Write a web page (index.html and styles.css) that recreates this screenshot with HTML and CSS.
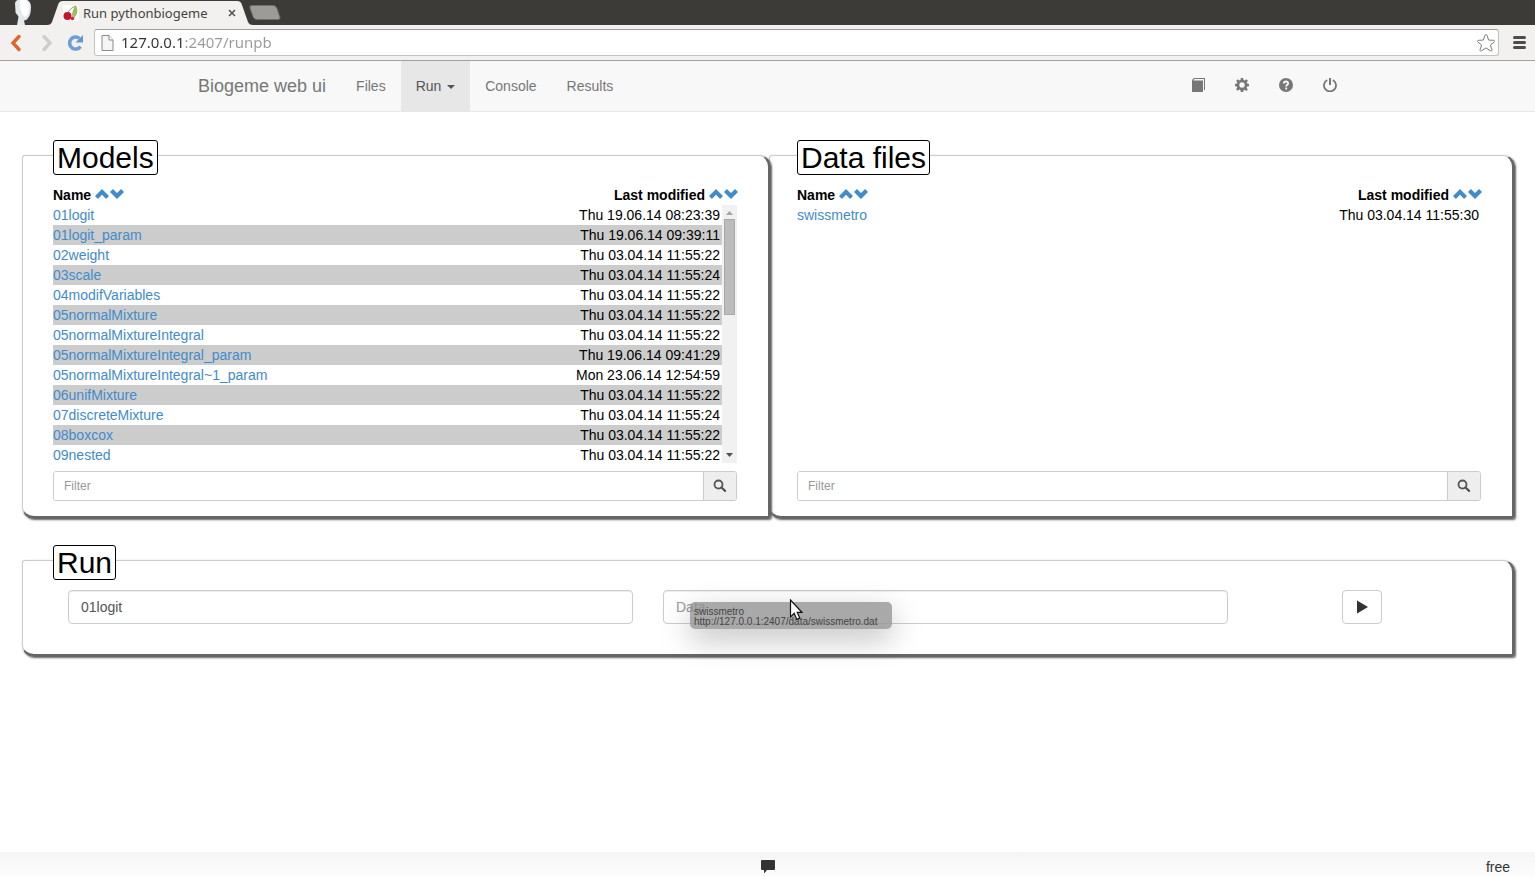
FILE: index.html
```html
<!DOCTYPE html>
<html lang="en">
<head>
<meta charset="utf-8">
<title>Run pythonbiogeme</title>
<link rel="stylesheet" href="styles.css">
</head>
<body>
<svg class="defs" aria-hidden="true">
  <symbol id="up" viewBox="0 0 14 14"><path d="M0 9 7 2l7 7-2.900 2.900L7 7.800l-4.100 4.100z"/></symbol>
  <symbol id="down" viewBox="0 0 14 14"><path d="M0 4.900 2.900 2 7 6.100 11.100 2 14 4.900l-7 7z"/></symbol>
  <symbol id="search" viewBox="0 0 14 14"><circle cx="5.500" cy="5.500" r="4" fill="none" stroke="currentColor" stroke-width="1.800"/><path d="M8.500 8.500l3.600 3.400" stroke="currentColor" stroke-width="2.200" stroke-linecap="round"/></symbol>
</svg>

<header class="browser">
  <div class="tabstrip">
    <svg class="head" width="20" height="25" viewBox="0 0 20 25"><path d="M2 3C3 0 6-1 10-1c5 0 8 3 8 8 0 5-1 9-3 11-1 2-2 2-4 2.500L12 25H4l1.500-8C5 14 2 14 2.500 11z" fill="#e3eaec"/><path d="M7 0c5-1 9 1 9 6s-1 9-4 11C8 15 6 5 7 0z" fill="#fff"/></svg>
    <div class="tab">
      <svg class="tab-shape" width="206" height="25" viewBox="0 0 206 25"><path d="M0 25c3 0 4-1 5-3l6-17c1-3 2-4 5-4h174c3 0 4 1 5 4l6 17c1 2 2 3 5 3z" fill="#f2f1f0"/></svg>
      <svg class="favicon" width="16" height="16" viewBox="0 0 16 16"><path d="M0 0h16v16H0z" fill="#fff"/><path d="M4 9C6 5 8 3 13 1M10 12C9 8 11 4 13 1" fill="none" stroke="#839a48"/><path d="M13 1c2 3 2 8-2 12-2-4 0-8 2-12z" fill="#99bd59"/><circle cx="4.500" cy="11" r="4" fill="#c3182b"/><circle cx="9.500" cy="13.500" r="1.800" fill="#d5223a"/></svg>
      <span class="tab-title">Run pythonbiogeme</span>
      <button class="tab-close" aria-label="Close tab"><svg width="8" height="8" viewBox="0 0 8 8"><path d="M1 1l6 6M7 1 1 7" stroke="#55544f" stroke-width="1.600"/></svg></button>
    </div>
    <button class="newtab" aria-label="New tab"><svg width="32" height="15" viewBox="0 0 32 15"><path d="M3 .5h21q3 0 4 3l3 9q.5 2-2 2H8q-3 0-4-3L1 3Q0 .5 3 .5z" fill="#9c9b98" stroke="#6e6d69"/></svg></button>
  </div>
  <div class="toolbar">
    <button aria-label="Back"><svg width="12" height="18" viewBox="0 0 12 18"><path d="M9 2.500 3 9l6 6.500" fill="none" stroke="#e0642d" stroke-width="3.400" stroke-linecap="round"/></svg></button>
    <button aria-label="Forward"><svg width="12" height="18" viewBox="0 0 12 18"><path d="M3 2.500 9 9l-6 6.500" fill="none" stroke="#cfcdcb" stroke-width="3.400" stroke-linecap="round"/></svg></button>
    <button aria-label="Reload"><svg width="18" height="18" viewBox="0 0 18 18"><path d="M12.500 4.500A6 6 0 1 0 13.500 12.500" fill="none" stroke="#6d9fd6" stroke-width="3.600"/><path d="M16 1v7.500H8.500z" fill="#6296cf"/></svg></button>
    <div class="omnibox">
      <svg width="13" height="16" viewBox="0 0 13 16"><path d="M1 .5h7l4 4.500v10.500H1z" fill="#f5f5f5" stroke="#8a8a8a"/><path d="M8 .5V5h4" fill="#fff" stroke="#8a8a8a"/></svg>
      <input class="url" aria-label="Address" value="127.0.0.1:2407/runpb">
      <button aria-label="Bookmark this page"><svg width="20" height="20" viewBox="0 0 20 20"><path d="M10 1.500c.7 0 1 .5 1.200 1.200l1.400 4.400 4.800.2c1.400.1 1.600 1.100.6 1.900l-3.600 2.800 1.500 4.500c.4 1.400-.5 2-1.600 1.200L10 14.900l-4.300 2.800c-1.100.8-2 .2-1.600-1.200L5.600 12 2 9.200c-1-.8-.8-1.800.6-1.900l4.800-.2 1.400-4.400C9 2 9.300 1.500 10 1.500z" fill="#fff" stroke="#7c7c7c"/></svg></button>
    </div>
    <button aria-label="Menu"><svg width="13" height="13" viewBox="0 0 13 13"><path d="M1.500 1.500h10M1.500 6.500h10M1.500 11.500h10" stroke="#4d4d4d" stroke-width="3" stroke-linecap="round"/></svg></button>
  </div>
</header>

<nav class="navbar">
  <div class="container">
    <a class="brand" href="#">Biogeme web ui</a>
    <a href="#">Files</a>
    <a class="active" href="#">Run <i class="caret"></i></a>
    <a href="#">Console</a>
    <a href="#">Results</a>
    <a class="first-icon" href="#" aria-label="Manual"><svg width="14" height="14" viewBox="0 0 14 14"><path d="M3 0h11v12h-1V1H3.500L2 2.500h10V14H1V2z"/></svg></a>
    <a href="#" aria-label="Settings"><svg width="14" height="14" viewBox="0 0 14 14"><path fill-rule="evenodd" d="M5.800 0h2.400l.4 1.900 1.100.5 1.700-1.200 1.500 1.500-1.200 1.700.5 1.100 1.800.4v2.300l-1.900.4-.5 1.100 1.200 1.700-1.500 1.500-1.700-1.200-1.100.5-.3 1.800H5.800l-.4-1.900-1.100-.5-1.700 1.200-1.500-1.500 1.200-1.700-.5-1.100L0 8.200V5.900l1.900-.4.5-1.100L1.200 2.700l1.500-1.500 1.700 1.200 1.100-.5zM7 4.300a2.700 2.700 0 1 0 0 5.400 2.700 2.700 0 0 0 0-5.400z"/></svg></a>
    <a href="#" aria-label="Help"><svg width="14" height="14" viewBox="0 0 14 14"><circle cx="7" cy="7" r="7"/><path d="M4.800 5.600C4.800 2.800 9.200 2.900 9.200 5.300 9.200 6.800 7.200 6.700 7.200 8.400M7.200 9.500v1.900" fill="none" stroke="#f8f8f8" stroke-width="1.800"/></svg></a>
    <a href="#" aria-label="Shut down"><svg width="14" height="14" viewBox="0 0 14 14"><path d="M4.200 2A6 6 0 1 0 9.800 2" fill="none" stroke="currentColor" stroke-width="1.800"/><path d="M6 0h2v7H6z"/></svg></a>
  </div>
</nav>

<main>
  <div class="panels">
    <section class="panel models">
      <h2>Models</h2>
      <div class="sorts">
        <div>Name <button aria-label="Name ascending"><svg><use href="#up"/></svg></button><button aria-label="Name descending"><svg><use href="#down"/></svg></button></div>
        <div>Last modified <button aria-label="Date ascending"><svg><use href="#up"/></svg></button><button aria-label="Date descending"><svg><use href="#down"/></svg></button></div>
      </div>
      <div class="list">
        <table>
          <tr><td><a href="#">01logit</a></td><td>Thu 19.06.14 08:23:39</td></tr>
          <tr><td><a href="#">01logit_param</a></td><td>Thu 19.06.14 09:39:11</td></tr>
          <tr><td><a href="#">02weight</a></td><td>Thu 03.04.14 11:55:22</td></tr>
          <tr><td><a href="#">03scale</a></td><td>Thu 03.04.14 11:55:24</td></tr>
          <tr><td><a href="#">04modifVariables</a></td><td>Thu 03.04.14 11:55:22</td></tr>
          <tr><td><a href="#">05normalMixture</a></td><td>Thu 03.04.14 11:55:22</td></tr>
          <tr><td><a href="#">05normalMixtureIntegral</a></td><td>Thu 03.04.14 11:55:22</td></tr>
          <tr><td><a href="#">05normalMixtureIntegral_param</a></td><td>Thu 19.06.14 09:41:29</td></tr>
          <tr><td><a href="#">05normalMixtureIntegral~1_param</a></td><td>Mon 23.06.14 12:54:59</td></tr>
          <tr><td><a href="#">06unifMixture</a></td><td>Thu 03.04.14 11:55:22</td></tr>
          <tr><td><a href="#">07discreteMixture</a></td><td>Thu 03.04.14 11:55:24</td></tr>
          <tr><td><a href="#">08boxcox</a></td><td>Thu 03.04.14 11:55:22</td></tr>
          <tr><td><a href="#">09nested</a></td><td>Thu 03.04.14 11:55:22</td></tr>
        </table>
        <div class="scrollbar">
          <svg width="7" height="4" viewBox="0 0 7 4"><path d="M0 4 3.500 0 7 4z" fill="#a3a3a3"/></svg>
          <div class="thumb"></div>
          <svg class="end" width="7" height="4" viewBox="0 0 7 4"><path d="M0 0h7L3.500 4z" fill="#505050"/></svg>
        </div>
      </div>
      <div class="filter"><input aria-label="Filter models" placeholder="Filter"><button aria-label="Search models"><svg><use href="#search"/></svg></button></div>
    </section>

    <section class="panel data">
      <h2>Data files</h2>
      <div class="sorts">
        <div>Name <button aria-label="Name ascending"><svg><use href="#up"/></svg></button><button aria-label="Name descending"><svg><use href="#down"/></svg></button></div>
        <div>Last modified <button aria-label="Date ascending"><svg><use href="#up"/></svg></button><button aria-label="Date descending"><svg><use href="#down"/></svg></button></div>
      </div>
      <div class="list">
        <table>
          <tr><td><a href="#">swissmetro</a></td><td>Thu 03.04.14 11:55:30</td></tr>
        </table>
      </div>
      <div class="filter"><input aria-label="Filter data files" placeholder="Filter"><button aria-label="Search data files"><svg><use href="#search"/></svg></button></div>
    </section>
  </div>

  <section class="panel run">
    <h2>Run</h2>
    <form class="run-row">
      <div><input aria-label="Model" value="01logit"></div>
      <div class="drop">
        <input aria-label="Data" placeholder="Data">
        <div class="ghost">swissmetro<br>http://127.0.0.1:2407/data/swissmetro.dat</div>
        <svg class="cursor" width="14" height="22" viewBox="0 0 14 22"><path d="M1.500 1v17l3.700-3.600 2.600 6 3-1.300-2.600-5.800h4.700z" fill="#fff" stroke="#111" stroke-width="1.200"/></svg>
      </div>
      <div class="go"><button type="button" aria-label="Run model"><svg width="14" height="14" viewBox="0 0 14 14"><path d="M2 .5 13 7 2 13.500z"/></svg></button></div>
    </form>
  </section>
</main>

<footer>
  <button aria-label="Messages"><svg width="14" height="14" viewBox="0 0 14 14"><path d="M1 0h12q1 0 1 1v8q0 1-1 1H6l-3 3.500V10H1q-1 0-1-1V1q0-1 1-1z"/></svg></button>
  <span>free</span>
</footer>
</body>
</html>
```
FILE: styles.css
```css
* { box-sizing: border-box; }
body {
  margin: 0;
  height: 100vh;
  overflow: hidden;
  display: flex;
  flex-direction: column;
  background: #fff;
  color: #333;
  font: 14px/20px "Liberation Sans", Arial, sans-serif;
}
svg { display: block; fill: currentColor; }
button { border: 0; padding: 0; background: none; color: inherit; }
input { font-family: inherit; min-width: 0; outline: 0; }
a { color: #428bca; text-decoration: none; }
.defs { position: absolute; width: 0; height: 0; }

.browser { font-family: "Noto Sans", "Open Sans", sans-serif; background: #f2f1f0; border-bottom: 1px solid #a3a19f; }
.tabstrip { display: flex; height: 25px; padding-left: 13px; background: #3c3b37; }
.tab { position: relative; display: flex; align-items: center; width: 206px; margin-left: 14px; padding: 0 17px 0 16px; }
.tab-shape { position: absolute; left: 0; top: 0; }
.favicon, .tab-title, .tab-close { position: relative; }
.tab-title { flex: 1; margin-left: 4px; font-size: 13px; color: #45443f; white-space: nowrap; }
.newtab { align-self: center; margin-left: -4px; }
.toolbar { display: flex; align-items: center; gap: 14px; height: 35px; padding: 0 9px 0 10px; }
.toolbar > button:nth-child(2) { margin-left: 5px; }
.toolbar > button:nth-child(3) { margin-right: -2px; }
.omnibox { flex: 1; display: flex; align-items: center; height: 27px; padding: 0 2px 0 6px; background: #fff; border: 1px solid #c3c1bf; border-top-color: #a09e9c; border-radius: 3px; margin-left: -3px; }
.url {
  flex: 1;
  border: 0;
  padding: 0 0 2px 7px;
  font-size: 15px;
  color: #8a8a8a;
  -webkit-text-fill-color: transparent;
  background: linear-gradient(90deg, #333 70px, #999 70px) text;
}

.navbar { background: #f8f8f8; border-bottom: 1px solid #e7e7e7; }
.container { display: flex; width: 100%; max-width: 1169px; margin: 0 auto; }
.navbar a { padding: 15px; color: #777; }
.navbar .brand { font-size: 18px; }
.navbar .active { background: #e7e7e7; color: #555; }
.navbar .first-icon { margin-left: auto; }
.navbar svg { margin-top: 2px; }
.caret { display: inline-block; margin-left: 2px; vertical-align: middle; border: 4px solid transparent; border-top-color: currentColor; border-bottom: 0; }

main { flex: 1; padding: 43px 20px 0 22px; }
.panels { display: grid; grid-template-columns: 1fr 1fr; margin-right: -1px; }
.panel {
  border: 1px solid #ccc;
  border-right: 3px solid #666;
  border-bottom: 3px solid #666;
  border-radius: 3px 12px 3px 12px;
  box-shadow: 1px 1px 2px #666;
  padding: 0 31px 15px 30px;
  color: #000;
}
.models { position: relative; z-index: 1; margin-right: -2px; }
.data { margin-right: 1px; padding-left: 27px; }
.panel h2 {
  width: fit-content;
  margin: -16px 0 10px;
  padding: 0 3px;
  border: 1px solid #000;
  border-radius: 3px;
  background: #fff;
  font-size: 30px;
  line-height: 33px;
  font-weight: 400;
}
.sorts { display: flex; justify-content: space-between; font-weight: 700; margin-right: -1px; }
.sorts div { display: flex; gap: 1px; }
.sorts button { color: #428bca; }
.sorts button:first-of-type { margin-left: 3px; }
.sorts svg, .filter svg { width: 14px; height: 14px; }
.sorts svg { margin-top: -2px; }
.list { display: flex; align-items: flex-start; height: 258px; overflow: hidden; }
table { flex: 1; border-collapse: collapse; }
td { padding: 0; height: 20px; }
td:last-child { text-align: right; padding-right: 2px; }
tr:nth-child(even) { background: #ccc; }
.scrollbar { display: flex; flex-direction: column; align-items: center; width: 15px; height: 100%; padding: 6px 0; background: #f1f1f1; }
.thumb { width: 11px; height: 96px; margin-top: 4px; background: #bcbcbc; border: 1px solid #a8a8a8; }
.end { margin-top: auto; }
.filter { display: flex; height: 30px; margin-top: 8px; border: 1px solid #ccc; border-radius: 3px; overflow: hidden; }
.filter input { flex: 1; border: 0; padding: 0 10px; font-size: 12px; }
.filter button { width: 33px; display: grid; place-items: center; background: #eee; border-left: 1px solid #ccc; color: #555; }
::placeholder { color: #999; opacity: 1; }

.run { margin-top: 41px; padding-bottom: 30px; }
.run-row { display: grid; grid-template-columns: 5fr 5fr 2fr; }
.run-row > div { padding: 0 15px; }
.run-row input { display: block; width: 100%; height: 34px; padding: 6px 12px; border: 1px solid #ccc; border-radius: 4px; font-size: 14px; color: #555; box-shadow: inset 0 1px 1px rgba(0, 0, 0, .075); }
.go { display: flex; justify-content: center; }
.go button { display: grid; place-items: center; width: 40px; height: 34px; border: 1px solid #ccc; border-radius: 4px; color: #333; }
.go svg { width: 14px; height: 14px; }
.drop { position: relative; }
.ghost { position: absolute; left: 42px; top: 12px; min-width: 202px; padding: 5px 4px 2px; border-radius: 5px; background: rgba(145, 145, 145, .78); color: #444; font-size: 10px; line-height: 10px; white-space: nowrap; box-shadow: 0 10px 30px rgba(0, 0, 0, .25); }
.cursor { position: absolute; left: 141px; top: 9px; }

footer { display: grid; grid-template-columns: 1fr auto 1fr; align-items: start; height: 24px; padding: 5px 25px 0; overflow: hidden; background: linear-gradient(#f5f5f5, #fdfdfd); }
footer button { grid-column: 2; margin-top: 3px; color: #333; }
footer span { justify-self: end; }
```
